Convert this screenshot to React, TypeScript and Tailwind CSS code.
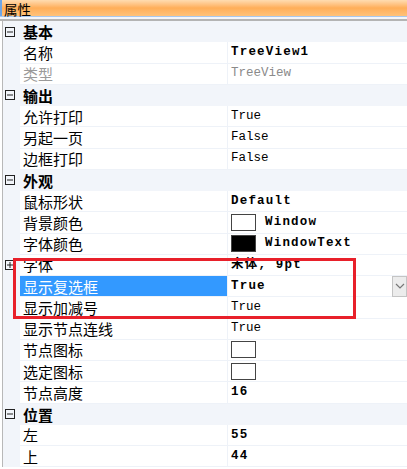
import React from "react";

type Item = {
  name: string;
  value?: string;
  bold?: boolean;
  disabled?: boolean;
  swatch?: "white" | "black";
  expand?: boolean;
  selected?: boolean;
};

type Group = { title: string; items: Item[] };

const groups: Group[] = [
  {
    title: "基本",
    items: [
      { name: "名称", value: "TreeView1", bold: true },
      { name: "类型", value: "TreeView", disabled: true },
    ],
  },
  {
    title: "输出",
    items: [
      { name: "允许打印", value: "True" },
      { name: "另起一页", value: "False" },
      { name: "边框打印", value: "False" },
    ],
  },
  {
    title: "外观",
    items: [
      { name: "鼠标形状", value: "Default", bold: true },
      { name: "背景颜色", value: "Window", bold: true, swatch: "white" },
      { name: "字体颜色", value: "WindowText", bold: true, swatch: "black" },
      { name: "字体", value: "宋体, 9pt", bold: true, expand: true },
      { name: "显示复选框", value: "True", bold: true, selected: true },
      { name: "显示加减号", value: "True" },
      { name: "显示节点连线", value: "True" },
      { name: "节点图标", swatch: "white" },
      { name: "选定图标", swatch: "white" },
      { name: "节点高度", value: "16", bold: true },
    ],
  },
  {
    title: "位置",
    items: [
      { name: "左", value: "55", bold: true },
      { name: "上", value: "44", bold: true },
    ],
  },
];

const cjk = { fontFamily: '"Noto Sans CJK SC", "Noto Sans", sans-serif' };
const mono = { fontFamily: '"Liberation Mono", "Noto Sans CJK SC", monospace' };

const BoxIcon = ({ plus }: { plus?: boolean }) => (
  <svg width="10" height="10" viewBox="0 0 10 10" className="block">
    <rect x="0.5" y="0.5" width="9" height="9" fill="none" stroke="#222" />
    <line x1="2" y1="5" x2="8" y2="5" stroke="#222" />
    {plus && <line x1="5" y1="2" x2="5" y2="8" stroke="#222" />}
  </svg>
);

const Row = ({ item }: { item: Item }) => (
  <div className="flex h-[21.25px] relative">
    <div className="w-[17px] shrink-0 bg-[#f2f5fa] flex items-center pl-[2px]">
      {item.expand && <BoxIcon plus />}
    </div>
    <div
      className={`w-[207px] shrink-0 flex items-center pl-[3px] text-[15px] leading-none border-b border-[#eef2f8] ${
        item.selected ? "bg-[#3399ff] text-white" : "bg-white"
      } ${item.disabled ? "text-[#9a9a9a]" : item.selected ? "" : "text-black"}`}
      style={cjk}
    >
      {item.name}
    </div>
    <div className="flex-1 flex items-center bg-white border-l border-b border-[#eef2f8] pl-[3px]">
      {item.swatch && (
        <span
          className={`w-[25px] h-[17px] border border-[#444] mr-[9px] ${
            item.swatch === "black" ? "bg-black" : "bg-white"
          }`}
        />
      )}
      {item.value && (
        <span
          className={`text-[12.5px] leading-none whitespace-pre ${
            item.bold ? "font-bold tracking-[1.2px]" : ""
          } ${item.disabled ? "text-[#8a8a8a]" : "text-black"}`}
          style={mono}
        >
          {item.value}
        </span>
      )}
      {item.selected && (
        <div className="ml-auto w-[15px] h-[21px] bg-[#ececec] border border-[#c4c4c4] flex items-center justify-center">
          <svg width="10" height="6" viewBox="0 0 10 6">
            <path d="M1 1 L5 5 L9 1" fill="none" stroke="#777" strokeWidth="1.2" />
          </svg>
        </div>
      )}
    </div>
  </div>
);

export default function App() {
  return (
    <div className="w-[407px] h-[469px] overflow-hidden bg-white relative">
      {/* Title bar */}
      <div className="h-[16px] border-l-2 border-[#6fa6e6] bg-gradient-to-b from-[#ffdcb0] via-[#ffae58] to-[#ffc27a] pl-[2px]">
        <div className="relative z-10 -top-[1px] text-[13.5px] leading-[20px] h-[16px] text-black" style={cjk}>
          属性
        </div>
      </div>
      <div className="h-[1px] bg-[#a9c8ee]" />
      <div className="h-[2px] bg-[#f4f6fa]" />
      <div className="h-[2px] bg-[#b4b4b4]" />

      {/* Grid */}
      <div className="flex">
        <div className="w-[2px] bg-white" />
        <div className="w-[1px] bg-[#b8b8b8]" />
        <div className="flex-1 flex flex-col">
          {groups.map((g) => (
            <React.Fragment key={g.title}>
              <div className="flex h-[21.25px] bg-[#f2f5fa] items-center">
                <div className="w-[17px] shrink-0 flex items-center pl-[2px]">
                  <BoxIcon />
                </div>
                <span
                  className="pl-[3px] text-[15px] leading-none font-bold text-black"
                  style={cjk}
                >
                  {g.title}
                </span>
              </div>
              {g.items.map((it) => (
                <Row key={it.name} item={it} />
              ))}
            </React.Fragment>
          ))}
        </div>
      </div>

      {/* Red highlight frame */}
      <div className="absolute left-[13px] top-[258px] w-[343px] h-[61px] border-[3px] border-[#e8202a] pointer-events-none" />
    </div>
  );
}
